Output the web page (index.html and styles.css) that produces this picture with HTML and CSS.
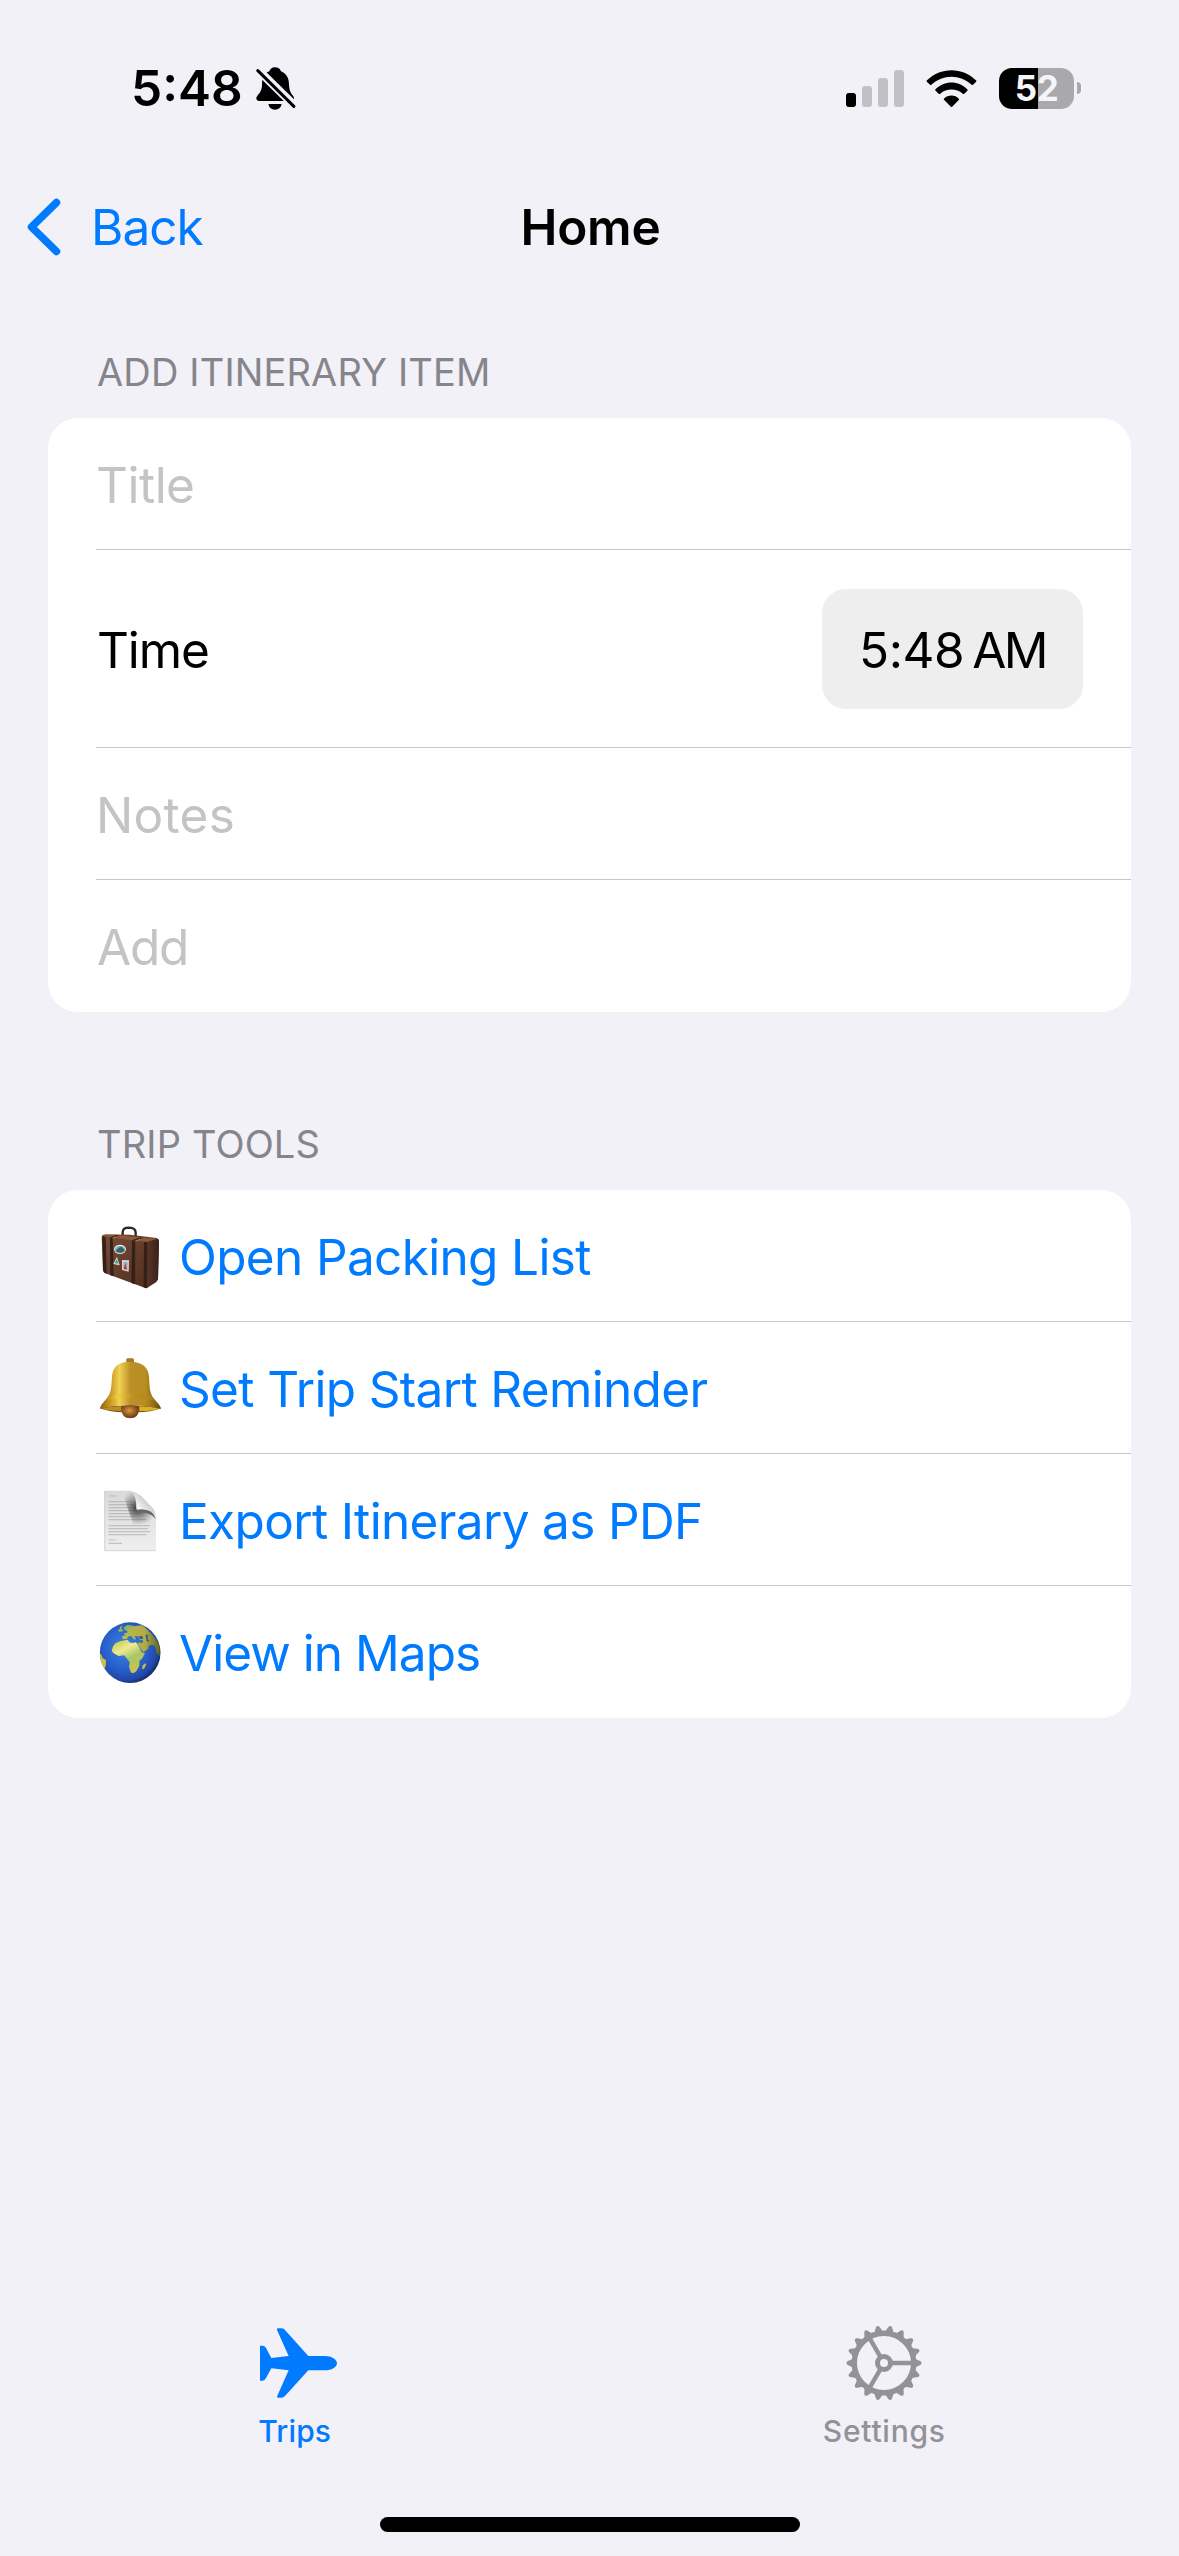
FILE: index.html
```html
<!DOCTYPE html>
<html lang="en">
<head>
<meta charset="utf-8">
<title>Home</title>
<link rel="stylesheet" href="styles.css">
</head>
<body>
<div class="screen">
  <header class="status">
    <div class="status-left">
      <span class="clock">5:48</span>
      <svg class="mute" viewBox="467 80 120 130">
        <path d="M524 81C514 81 509 87 507 93C491 99 485 111 485 128C485 148 480 156 471 166C464 175 468 183 477 183H572C582 183 584 173 578 166C570 156 567 150 566 128C565 108 554 98 542 93C539 86 534 81 524 81ZM504 192H544C542 203 534 209 524 209C514 209 506 203 504 192Z"/>
        <path class="mute-gap" d="M474 82L593 199"/>
        <path class="mute-gap" d="M467 91L577 199"/>
        <path class="mute-slash" d="M472 91L581 199"/>
      </svg>
    </div>
    <div class="status-right">
      <svg class="signal" viewBox="0 0 58 37">
        <rect x="0" y="23" width="10" height="14" rx="3"/>
        <g fill="#c1c0c5"><rect x="16" y="16" width="10" height="21" rx="3"/><rect x="32" y="8" width="10" height="29" rx="3"/><rect x="48" y="0" width="10" height="37" rx="3"/></g>
      </svg>
      <svg class="wifi" viewBox="319 86 152 112">
        <path d="M320 118C362 76 428 76 470 118Q471 120 469 122L460 131Q458 133 456 131C421 98 369 98 334 131Q332 133 330 131L321 122Q319 120 320 118ZM346 145C373 117 417 117 443 145Q445 147 443 149L434 158Q432 160 429 158C410 141 380 141 361 158Q358 160 356 158L347 149Q345 147 346 145ZM372 173C384 160 406 160 417 173Q419 175 417 177L397 197Q395 199 393 197L373 177Q371 175 372 173Z"/>
      </svg>
      <div class="battery"><div class="battery-body">52</div><div class="battery-tip"></div></div>
    </div>
  </header>

  <nav class="nav">
    <a class="back">
      <svg class="chevron" viewBox="0 0 34 58"><path d="M29.5 4.5L4.5 29L29.5 53.5"/></svg>
      <span>Back</span>
    </a>
    <h1 class="title">Home</h1>
    <div></div>
  </nav>

  <main>
    <section>
      <h2 class="heading">ADD ITINERARY ITEM</h2>
      <div class="card">
        <div class="row hint">Title</div>
        <div class="row tall"><span class="label">Time</span><div class="pill"><span>5:48</span><span class="meridiem">AM</span></div></div>
        <div class="row hint notes">Notes</div>
        <div class="row hint add">Add</div>
      </div>
    </section>
    <section>
      <h2 class="heading second">TRIP TOOLS</h2>
      <div class="card">
        <div class="row tool">
          <svg class="emoji" viewBox="57 73 186 192">
            <defs>
              <linearGradient id="leather" x1="0" x2="1" y1="0" y2="1"><stop offset="0" stop-color="#7a4c36"/><stop offset="1" stop-color="#4b2a1d"/></linearGradient>
              <linearGradient id="leatherSide" x1="0" x2="1"><stop offset="0" stop-color="#5f3828"/><stop offset="1" stop-color="#38211a"/></linearGradient>
            </defs>
            <path d="M128 104V94Q129 81 147 81Q167 82 167 96V112" fill="none" stroke="#33241f" stroke-width="7"/>
            <path d="M66 106Q68 101 80 101L150 102L230 112Q237 114 237 122L234 236Q233 241 228 245L201 262Q197 264 190 260L76 218Q69 215 69 208L65 112Z" fill="url(#leather)"/>
            <path d="M201 124L234 115Q237 117 237 124L234 236L201 262Q194 262 195 250Z" fill="url(#leatherSide)"/>
            <path d="M70 104L105 102L166 109L230 114L200 124L90 110Z" fill="#8b5a3b"/>
            <path d="M67 106L77 111L80 219L73 216L69 208ZM90 110L98 111L101 227L91 224ZM156 118L166 120L165 251L154 247ZM192 123L202 125L201 262L191 260Z" fill="#342019"/>
            <path d="M90 110L110 103L119 104L98 112ZM156 118L182 110L191 111L167 120Z" fill="#43291d"/>
            <path d="M98 113L108 109M166 122L181 116" stroke="#b38a45" stroke-width="3"/>
            <ellipse cx="120" cy="146" rx="18" ry="14" fill="#e8e6de"/><ellipse cx="120" cy="147" rx="15" ry="11" fill="#6fa9cc"/><path d="M107 151L116 142L124 138L132 146L134 151Q121 161 107 151Z" fill="#3d5f5c"/>
            <path d="M111 168L119 194L100 190Z" fill="#dfe5c8"/><path d="M111 174L115 189L104 188Z" fill="#4697a8"/>
            <path d="M126 178L147 179L146 213L126 208Z" fill="#ddd7d0"/><path d="M130 183L143 184L142 208L130 205Z" fill="#8dafc2"/><path d="M136 188L141 207L131 204Z" fill="#c53030"/>
          </svg>
          <span>Open Packing List</span>
        </div>
        <div class="row tool">
          <svg class="emoji" viewBox="57 473 186 192">
            <defs>
              <linearGradient id="brass" x1="0" x2="1"><stop offset="0" stop-color="#8d6414"/><stop offset=".2" stop-color="#d0a42b"/><stop offset=".32" stop-color="#f0d152"/><stop offset=".5" stop-color="#bd9027"/><stop offset=".75" stop-color="#b88d20"/><stop offset=".9" stop-color="#8c6816"/><stop offset="1" stop-color="#5f430d"/></linearGradient>
              <radialGradient id="clapper" cx=".45" cy=".4"><stop offset="0" stop-color="#d9973c"/><stop offset="1" stop-color="#74451a"/></radialGradient>
              <linearGradient id="rim" x1="0" x2="1"><stop offset="0" stop-color="#a98218"/><stop offset=".25" stop-color="#f2d13c"/><stop offset=".6" stop-color="#b98b1c"/><stop offset="1" stop-color="#a58a1d"/></linearGradient>
            </defs>
            <path d="M139 492V480Q139 477 145 477H156Q162 477 162 481V492Z" fill="#a37a1c"/>
            <path d="M60 627Q100 642 150 638Q205 642 243 627L236 620H68Z" fill="#7c5512"/>
            <path d="M150 487C113 487 98 504 96 532C94 565 93 580 82 595C75 605 62 614 60 628Q150 608 243 628C240 614 225 605 218 593C208 575 209 560 207 532C205 506 190 487 150 487Z" fill="url(#brass)"/>
            <path d="M84 592Q150 572 218 593L228 604Q150 582 73 606Z" fill="url(#rim)" opacity=".7"/>
            <path d="M60 628Q150 607 243 628Q150 618 60 628Z" fill="#704c0e"/>
            <path d="M64 628Q100 620 124 621L124 635Q84 634 64 628Z" fill="#bc8d27"/>
            <path d="M178 621Q210 621 239 628Q220 635 178 635Z" fill="#dab321"/>
            <path d="M124 626Q124 618 151 618Q177 618 177 626Q177 657 151 657Q124 657 124 626Z" fill="url(#clapper)"/>
          </svg>
          <span>Set Trip Start Reminder</span>
        </div>
        <div class="row tool">
          <svg class="emoji" viewBox="57 88 186 192">
            <defs>
              <linearGradient id="paper" x1="0" x2="0" y1="0" y2="1"><stop offset="0" stop-color="#d9d9d9"/><stop offset="1" stop-color="#efefef"/></linearGradient>
              <linearGradient id="fold" x1="0" x2="1" y1="1" y2="0"><stop offset=".1" stop-color="#8b8b8b"/><stop offset=".35" stop-color="#f8f8f8"/><stop offset=".6" stop-color="#d2d2d2"/></linearGradient>
              <radialGradient id="shade" gradientUnits="userSpaceOnUse" cx="174" cy="145" r="55"><stop offset="0" stop-color="#222" stop-opacity=".95"/><stop offset=".4" stop-color="#444" stop-opacity=".6"/><stop offset="1" stop-color="#777" stop-opacity="0"/></radialGradient>
            </defs>
            <path d="M73 93H150Q168 95 170 112L172 150L205 153Q225 158 228 180V274H73Z" fill="url(#paper)"/>
            <path d="M74 94V273H227" fill="none" stroke="#c7c7c7" stroke-width="2"/>
            <path d="M86 109H110M86 126H154M86 135H162M86 144H165M86 153H164M86 162H170M86 171H166M86 180H200M86 198H210M86 207H204M86 216H210M86 225H200M86 241H109M86 251H126" stroke="#9a9a9a" stroke-width="3.4" opacity=".5"/>
            <path d="M150 93Q168 95 170 112L172 150L205 153Q225 158 228 182L200 192L160 195L125 93Z" fill="url(#shade)"/>
            <path d="M151 93Q166 96 183 108L218 145Q227 155 228 180Q222 154 196 151Q180 150 169 150Q171 108 151 93Z" fill="url(#fold)"/>
            <path d="M170 150Q218 143 228 180Q218 164 198 160Q184 157 170 159Z" fill="#666"/>
          </svg>
          <span>Export Itinerary as PDF</span>
        </div>
        <div class="row tool maps">
          <svg class="emoji" viewBox="57 484 186 192">
            <defs>
              <radialGradient id="sea" cx=".42" cy=".42" r=".6"><stop offset="0" stop-color="#3a86e0"/><stop offset=".6" stop-color="#285fcb"/><stop offset=".88" stop-color="#2148a8"/><stop offset="1" stop-color="#182f66"/></radialGradient>
              <linearGradient id="land" gradientUnits="userSpaceOnUse" x1="100" y1="500" x2="175" y2="640"><stop offset="0" stop-color="#86ad4d"/><stop offset=".25" stop-color="#c3c950"/><stop offset=".48" stop-color="#f0ea93"/><stop offset=".68" stop-color="#a8c765"/><stop offset="1" stop-color="#d6c04a"/></linearGradient>
              <linearGradient id="asia" x1="0" x2="1"><stop offset="0" stop-color="#b5bd4e"/><stop offset=".6" stop-color="#b3ab43"/><stop offset="1" stop-color="#5c6723"/></linearGradient>
              <clipPath id="disc"><circle cx="150.500" cy="579" r="91"/></clipPath>
            </defs>
            <circle cx="150.500" cy="579" r="91" fill="url(#sea)"/>
            <g clip-path="url(#disc)">
              <path d="M58 580Q66 584 68 595L78 602Q79 615 74 628L58 620Z" fill="#cfc33b"/>
              <path d="M120 502L128 497L124 507L131 513L120 517L113 513L119 508ZM131 504L142 496L160 498L151 507L143 514L135 512Z" fill="#8fb850"/>
              <path d="M142 512L158 500L185 497Q215 515 240 560L238 590L229 577L225 559L214 555L206 559L205 567L191 577L186 573L173 554L176 548L187 550L190 543L178 539L172 529L164 530L168 538L163 540L153 529L146 530L140 538L128 539L126 530L136 527L132 521L142 519Z" fill="url(#asia)"/>
              <path d="M122 544L143 540L148 548L157 550L168 548L174 556L185 578L195 580L187 596L178 604L178 618L169 635L161 640L153 639L147 621L149 608L140 596L133 587L116 589L101 581L95 574L99 560L107 550Z" fill="url(#land)"/>
              <path d="M196 611L199 614L192 628L186 627L188 617Z" fill="#c8bb46"/>
              <path d="M174 531L186 528L190 538L181 538ZM196 526L204 525L203 537L208 544L201 546Z" fill="#31599a"/>
            </g>
          </svg>
          <span>View in Maps</span>
        </div>
      </div>
    </section>
  </main>

  <footer class="tabs">
    <a class="tab active">
      <svg class="plane" viewBox="120 84 231 208"><path d="M265 167H316C334 167 351 177 351 188.500C351 200 334 210 316 210H265L197 285Q191 292 185 292H174Q169 292 172 286L206 210L154 204L138 233Q134 241 128 241H120V136H128Q134 136 138 143L154 173L206 167L172 91Q169 84 174 84H185Q191 84 197 91Z"/></svg>
      <span>Trips</span>
    </a>
    <a class="tab settings">
      <svg class="gear" viewBox="-38 -38 76 76">
        <defs>
          <path id="tooth" d="M31 -4.600Q34 -3 36 -2Q37.600 -1.400 37.600 0Q37.600 1.400 36 2Q34 3 31 4.600Z"/>
          <g id="teeth3"><use href="#tooth"/><use href="#tooth" transform="rotate(20)"/><use href="#tooth" transform="rotate(40)"/></g>
        </defs>
        <g fill="none" stroke="currentColor"><circle r="29.700" stroke-width="5.400"/><circle r="6.500" stroke-width="5"/><path d="M8 0H28M-4 -6.900L-14 -24.200M-4 6.900L-14 24.200" stroke-width="4.400"/></g>
        <g fill="currentColor"><use href="#teeth3"/><use href="#teeth3" transform="rotate(60)"/><use href="#teeth3" transform="rotate(120)"/><use href="#teeth3" transform="rotate(180)"/><use href="#teeth3" transform="rotate(240)"/><use href="#teeth3" transform="rotate(300)"/></g>
      </svg>
      <span>Settings</span>
    </a>
  </footer>
  <div class="home-bar"></div>
</div>
</body>
</html>
```
FILE: styles.css
```css
* { box-sizing: border-box; }
body { margin: 0; background: #f2f1f7; color: #000; font-family: Inter, "Liberation Sans", sans-serif; font-size: 49.5px; line-height: 60px; }
h1, h2 { margin: 0; }
svg { display: block; flex: none; }
.screen { width: 1179px; height: 2556px; display: flex; flex-direction: column; }

.status { height: 176px; display: flex; justify-content: space-between; align-items: center; padding: 0 98px 0 131px; }
.status-left, .status-right { display: flex; align-items: center; }
.clock { font-weight: 600; }
.mute { width: 40px; height: 43px; margin-left: 13px; }
.mute-gap { stroke: #f2f1f7; stroke-width: 14; }
.mute-slash { stroke: #000; stroke-width: 9; stroke-linecap: round; }
.signal { width: 58px; height: 37px; }
.wifi { width: 51px; height: 37px; margin: 0 22px; }
.battery { display: flex; align-items: center; gap: 3px; }
.battery-body { width: 75px; height: 41px; border-radius: 13px; background: linear-gradient(90deg, #000 39px, #a9a8ad 39px); color: #f5f4f8; font-size: 35px; font-weight: 700; line-height: 41px; text-align: center; letter-spacing: -0.4px; }
.battery-tip { width: 4px; height: 12px; border-radius: 0 4px 4px 0; background: #a9a8ad; }

.nav { height: 102px; display: grid; grid-template-columns: 1fr auto 1fr; align-items: center; padding: 0 27px; }
.back { display: flex; align-items: center; gap: 30px; color: #007aff; letter-spacing: -1px; }
.chevron { width: 34px; height: 58px; }
.chevron path { fill: none; stroke: #007aff; stroke-width: 7.5; stroke-linecap: round; stroke-linejoin: round; }
.title { padding-left: 2px; font-size: 49.5px; font-weight: 600; letter-spacing: -0.2px; }

.heading { height: 140px; padding: 71px 96px 23px 97px; font-size: 38px; font-weight: 400; line-height: 46px; letter-spacing: 0.15px; color: #85858b; }
.heading.second { height: 178px; padding-top: 109px; }
.card { margin: 0 48px; padding-left: 48px; background: #fff; border-radius: 30px; }
.row { height: 132px; padding: 3px 48px 0 0; display: flex; align-items: center; justify-content: space-between; border-bottom: 1px solid #c6c6c8; }
.row:last-child { border-bottom-color: transparent; }
.row.tall { height: 198px; padding-top: 1px; }
.label { padding: 2px 0 0 1px; letter-spacing: -1.1px; }
.hint { color: #c4c4c6; letter-spacing: -0.5px; }
.hint.notes { letter-spacing: 0.3px; }
.hint.add { padding-left: 1px; letter-spacing: -1.2px; }
.pill { width: 261px; height: 120px; padding-top: 1px; border-radius: 24px; background: #eeeeee; display: flex; align-items: center; justify-content: center; gap: 8px; letter-spacing: -0.45px; }
.meridiem { letter-spacing: -2.5px; }
.tool { justify-content: flex-start; gap: 18px; color: #007aff; letter-spacing: -0.65px; }
.tool.maps { letter-spacing: -0.95px; }
.emoji { width: 62px; height: 64px; margin-left: 3px; }

.tabs { margin-top: auto; height: 192px; display: flex; }
.tab { flex: 1; display: flex; flex-direction: column; align-items: center; color: #929297; font-size: 30px; font-weight: 500; line-height: 36px; letter-spacing: 0.15px; }
.tab.active { color: #007aff; }
.tab.settings { letter-spacing: 0.75px; }
.tab svg { margin-bottom: 12px; }
.plane { width: 77px; height: 76px; margin-left: 7px; fill: currentColor; }
.gear { width: 76px; height: 76px; }
.home-bar { width: 420px; height: 15px; border-radius: 8px; background: #000; margin: 0 auto 24px; }
```
